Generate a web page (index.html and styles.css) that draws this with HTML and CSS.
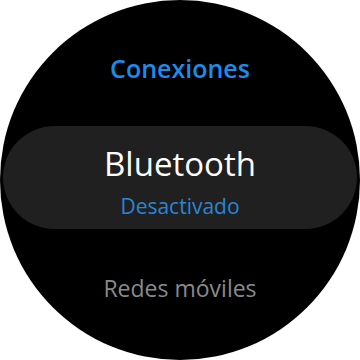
FILE: index.html
```html
<!DOCTYPE html>
<html lang="es">
<head>
    <meta charset="UTF-8">
    <meta name="viewport" content="width=device-width, initial-scale=1.0">
    <title>Conexiones</title>
    <link rel="stylesheet" href="styles.css">
</head>
<body>
    <div class="watch">
        <h1 class="title">Conexiones</h1>
        <div class="item item-active">
            <div class="item-name">Bluetooth</div>
            <div class="item-status">Desactivado</div>
        </div>
        <div class="item-next">Redes móviles</div>
    </div>
</body>
</html>
```

FILE: styles.css
```css
body {
    margin: 0;
    padding: 0;
    background-color: #fff;
    font-family: "Open Sans", Roboto, sans-serif;
}

.watch {
    width: 360px;
    height: 360px;
    border-radius: 50%;
    background-color: #000;
    overflow: hidden;
    display: flex;
    flex-direction: column;
    align-items: center;
}

.title {
    margin: 53px 0 0 0;
    font-size: 25px;
    line-height: 30px;
    font-weight: 600;
    color: #1b8cec;
}

.item {
    box-sizing: border-box;
    width: 354px;
    height: 103px;
    margin-top: 43px;
    padding-top: 19px;
    border-radius: 52px;
    background-color: #202020;
    display: flex;
    flex-direction: column;
    align-items: center;
}

.item-name {
    font-size: 33px;
    line-height: 38px;
    font-weight: 400;
    color: #fff;
}

.item-status {
    margin-top: 11px;
    font-size: 21px;
    line-height: 24px;
    color: #2a85d6;
}

.item-next {
    margin-top: 45px;
    font-size: 23px;
    line-height: 28px;
    color: #8a8a8a;
}
```
